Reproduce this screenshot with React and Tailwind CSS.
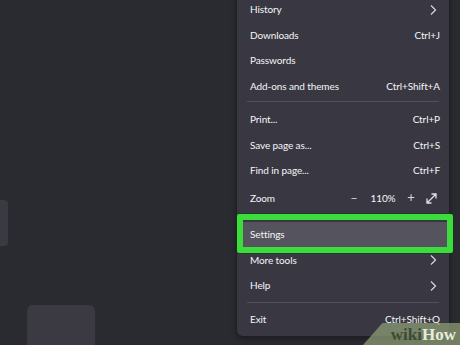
import React from 'react';

const font = { fontFamily: 'Lato, "Noto Sans", sans-serif' };

function Chevron() {
  return (
    <svg width="10" height="12" viewBox="0 0 10 12" className="text-[#d8d8de]">
      <path d="M3 1.5 L7.5 6 L3 10.5" fill="none" stroke="currentColor" strokeWidth="1.2" />
    </svg>
  );
}

function Row({ label, shortcut, arrow }) {
  return (
    <div className="flex h-[25.5px] items-center justify-between pl-[13px] pr-[9px]">
      <span>{label}</span>
      {shortcut && <span>{shortcut}</span>}
      {arrow && <span className="mr-[2px]"><Chevron /></span>}
    </div>
  );
}

function Sep({ className }) {
  return <div className={`mx-[10px] h-px bg-[#52515b] ${className}`} />;
}

export default function App() {
  return (
    <div className="relative h-[345px] w-[460px] overflow-hidden bg-[#2a2a31]" style={font}>
      {/* background page shapes */}
      <div className="absolute left-0 top-[200px] h-[46px] w-[8px] rounded-r-[4px] bg-[#3a3a42]" />
      <div className="absolute left-[27px] top-[305px] h-[60px] w-[68px] rounded-t-[6px] bg-[#3b3a43]" />

      {/* app menu */}
      <div className="absolute left-[237px] top-[-10px] w-[212px] rounded-b-[6px] bg-[#393842] pt-[7px] pb-[4px] text-[10px] tracking-[-0.1px] text-[#f5f5f8] shadow-[0_2px_6px_rgba(0,0,0,0.45)]">
        <Row label="History" arrow />
        <Row label="Downloads" shortcut="Ctrl+J" />
        <Row label="Passwords" />
        <Row label="Add-ons and themes" shortcut="Ctrl+Shift+A" />
        <Sep className="mt-[2px] mb-[5px]" />
        <Row label="Print..." shortcut="Ctrl+P" />
        <Row label="Save page as..." shortcut="Ctrl+S" />
        <Row label="Find in page..." shortcut="Ctrl+F" />
        <div className="flex h-[29px] items-center pl-[13px] pr-[11px]">
          <span className="flex-1">Zoom</span>
          <span className="w-[16px] text-center text-[12px] text-[#d8d8de]">−</span>
          <span className="ml-[6px] w-[30px] text-center">110%</span>
          <span className="ml-[6px] w-[14px] text-center text-[13px] text-[#d8d8de]">+</span>
          <svg width="13" height="13" viewBox="0 0 13 13" className="ml-[7px] text-[#e0e0e6]">
            <path d="M2 11 L11 2 M6.5 2 H11 V6.5 M2 6.5 V11 H6.5" fill="none" stroke="currentColor" strokeWidth="1.3" />
          </svg>
        </div>
        <Sep className="mt-[4px] mb-[4.5px]" />
        <div className="relative">
          <div className="flex h-[25.5px] items-center bg-[#55545e] pl-[13px]">Settings</div>
          <div className="absolute left-0 right-[-4px] top-[-8px] h-[39px] rounded-[2px] border-[6px] border-[#3bdc3b] shadow-[0_0_0_1px_rgba(20,60,20,0.6)]" />
        </div>
        <Row label="More tools" arrow />
        <Row label="Help" arrow />
        <Sep className="mt-[3px] mb-[4px]" />
        <Row label="Exit" shortcut="Ctrl+Shift+Q" />
      </div>

      {/* watermark */}
      <div
        className="absolute bottom-0 right-0 h-[22px] w-[97px] bg-[#8c9c74]/75"
        style={{ clipPath: 'polygon(20% 0, 100% 0, 100% 100%, 0 100%)' }}
      />
      <div className="absolute bottom-[1px] right-[4px] text-[17px] font-bold leading-[18px]" style={{ fontFamily: '"Liberation Serif", serif' }}>
        <span className="text-[#3f4a35]">wiki</span>
        <span className="text-[#e6ecdc]">How</span>
      </div>
    </div>
  );
}
